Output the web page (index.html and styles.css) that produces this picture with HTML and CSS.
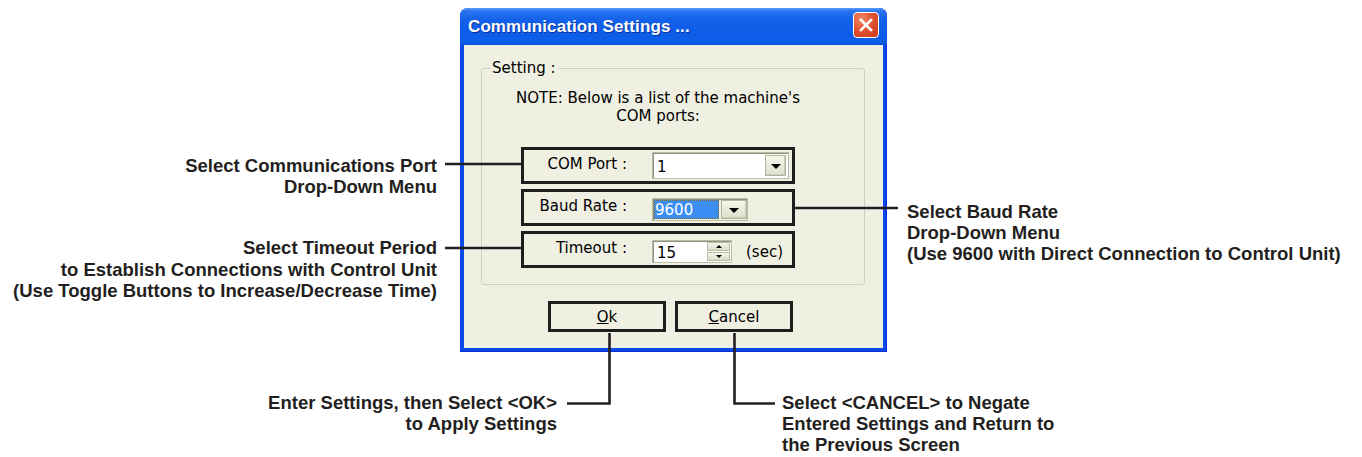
FILE: index.html
```html
<!DOCTYPE html>
<html>
<head>
<meta charset="utf-8">
<link rel="stylesheet" href="styles.css">
</head>
<body>
<div class="canvas">
  <div class="dialog">
    <div class="titlebar">
      <span class="title">Communication Settings ...</span>
      <span class="close"><svg width="24" height="24" viewBox="0 0 24 24"><path d="M7 7 L17 17 M17 7 L7 17" stroke="#fff" stroke-width="2.6" stroke-linecap="square"/></svg></span>
    </div>
    <div class="client">
      <fieldset class="group">
        <legend>Setting :</legend>
        <p class="note">NOTE: Below is a list of the machine's<br>COM ports:</p>
        <div class="rows">
          <div class="row">
            <span class="lbl">COM Port :</span>
            <div class="combo combo-com">
              <span class="val">1</span>
              <span class="dd"><i class="arrow"></i></span>
            </div>
          </div>
          <div class="row">
            <span class="lbl">Baud Rate :</span>
            <div class="combo combo-baud">
              <span class="sel">9600</span>
              <span class="dd dd-wide"><i class="arrow"></i></span>
            </div>
          </div>
          <div class="row">
            <span class="lbl">Timeout :</span>
            <div class="ctl">
              <div class="spin">
                <span class="val">15</span>
                <span class="spin-btns">
                  <span class="sb"><i class="up"></i></span>
                  <span class="sb"><i class="down"></i></span>
                </span>
              </div>
              <span class="unit">(sec)</span>
            </div>
          </div>
        </div>
      </fieldset>
      <div class="buttons">
        <button class="btn"><u>O</u>k</button>
        <button class="btn"><u>C</u>ancel</button>
      </div>
    </div>
  </div>

  <svg class="leaders" width="1362" height="457" viewBox="0 0 1362 457">
    <path d="M445 164 H521" />
    <path d="M445 248 H521" />
    <path d="M795 208 H898" />
    <path d="M609.5 333 V403.5 H567" />
    <path d="M734.5 333 V403.5 H775" />
  </svg>

  <div class="callout c-com">Select Communications Port<br>Drop-Down Menu</div>
  <div class="callout c-timeout">Select Timeout Period<br>to Establish Connections with Control Unit<br>(Use Toggle Buttons to Increase/Decrease Time)</div>
  <div class="callout c-baud">Select Baud Rate<br>Drop-Down Menu<br>(Use 9600 with Direct Connection to Control Unit)</div>
  <div class="callout c-ok">Enter Settings, then Select &lt;OK&gt;<br>to Apply Settings</div>
  <div class="callout c-cancel">Select &lt;CANCEL&gt; to Negate<br>Entered Settings and Return to<br>the Previous Screen</div>
</div>
</body>
</html>
```

FILE: styles.css
```css
* { box-sizing: border-box; }
html, body { margin: 0; background: #fff; }

.canvas {
  position: relative;
  width: 1362px;
  height: 457px;
  overflow: hidden;
  padding: 8px 0 0 460px;
}

/* ---------- dialog window ---------- */
.dialog {
  width: 427px;
  height: 344px;
  display: flex;
  flex-direction: column;
  padding: 0 4px 4px;
  border-radius: 8px 8px 0 0;
  background: #0b4ae8;
  box-shadow: inset -1px 0 0 #0a2fd8, inset 0 -1px 0 #0a2fd8;
}

.titlebar {
  height: 37px;
  margin: 0 -4px;
  padding: 0 8px;
  display: flex;
  align-items: center;
  justify-content: space-between;
  border-radius: 8px 8px 0 0;
  background: linear-gradient(to bottom, #5a9dfb 0%, #2b74f0 8%, #1462ea 30%, #0c5ce8 70%, #0f5fe9 92%, #0b4fe0 100%);
}

.title {
  font: bold 17px/20px "Liberation Sans", Arial, sans-serif;
  color: #fff;
  text-shadow: 1px 1px 0 #0b2f9c;
  letter-spacing: 0.1px;
}

.close {
  width: 26px;
  height: 26px;
  margin-top: -3px;
  display: flex;
  align-items: center;
  justify-content: center;
  border: 1px solid #fff;
  border-radius: 4px;
  background: radial-gradient(circle at 30% 25%, #f08a6a 0%, #e2532f 45%, #c63a1c 100%);
}

.client {
  flex: 1;
  background: #efefe2;
  padding: 14px 0 0 17px;
  font: 15px/18px "DejaVu Sans", Verdana, sans-serif;
  color: #000;
}

/* ---------- group box ---------- */
.group {
  width: 384px;
  margin: 0;
  padding: 0 30px 16px 0;
  border: 1px solid #d0d0bf;
  border-radius: 3px;
  min-inline-size: auto;
}

.group legend {
  margin-left: 8px;
  padding: 0 2px;
  font: 15px/18px "DejaVu Sans", Verdana, sans-serif;
}

.note {
  margin: 12px 0 22px;
  text-align: center;
  white-space: nowrap;
}

.rows {
  display: flex;
  flex-direction: column;
  align-items: center;
  gap: 5px;
}

.row {
  width: 274px;
  height: 37px;
  border: 3px solid #1e1e1e;
  display: grid;
  grid-template-columns: 103px auto;
  column-gap: 25px;
  align-items: center;
  justify-content: start;
}

.lbl {
  text-align: right;
  white-space: nowrap;
  margin-top: -3px;
}

/* ---------- combo boxes ---------- */
.combo {
  display: flex;
  align-items: stretch;
  background: #fff;
  border: 1px solid #b9bca6;
  box-shadow: inset 1px 1px 0 #8e907e;
  padding: 2px;
}

.combo-com { width: 137px; height: 27px; }
.combo-baud { width: 96px; height: 23px; margin-top: 4px; background: #efefe2; padding: 1px 0 1px 1px; }

.val {
  flex: 1;
  padding: 3px 0 0 2px;
  line-height: 18px;
}

.sel {
  width: 66px;
  background: #3d8ef4;
  color: #fff;
  outline: 1px dotted #8a6a20;
  outline-offset: -1px;
  padding-left: 1px;
  line-height: 20px;
}

.dd {
  width: 21px;
  display: flex;
  align-items: center;
  justify-content: center;
  background: linear-gradient(to bottom, #f6f6ec, #dedfcb);
  border: 1px solid #b3b79f;
  box-shadow: inset -1px -1px 0 #c9ccb6;
}

.dd-wide { width: 27px; margin-left: 2px; }

.arrow {
  width: 0;
  height: 0;
  border-left: 5px solid transparent;
  border-right: 5px solid transparent;
  border-top: 5px solid #000;
  margin-top: 1px;
}

/* ---------- spin box ---------- */
.ctl {
  display: flex;
  align-items: center;
  margin-top: 4px;
}

.spin {
  width: 80px;
  height: 23px;
  display: flex;
  background: #fff;
  border: 1px solid #b9bca6;
  box-shadow: inset 1px 1px 0 #8e907e;
  padding: 1px 1px 1px 2px;
}

.spin .val { padding-top: 2px; }

.spin-btns {
  width: 23px;
  display: flex;
  flex-direction: column;
  gap: 1px;
}

.sb {
  flex: 1;
  display: flex;
  align-items: center;
  justify-content: center;
  background: linear-gradient(to bottom, #f4f4ea, #dcdcc8);
  border: 1px solid #b8bca4;
}

.up, .down {
  width: 0;
  height: 0;
  border-left: 3px solid transparent;
  border-right: 3px solid transparent;
}
.up { border-bottom: 3px solid #000; }
.down { border-top: 3px solid #000; }

.unit { margin-left: 14px; }

/* ---------- buttons ---------- */
.buttons {
  width: 384px;
  margin-top: 16px;
  padding-right: 5px;
  display: flex;
  justify-content: center;
  gap: 9px;
}

.btn {
  width: 118px;
  height: 31px;
  padding: 0;
  border: 3px solid #1e1e1e;
  background: transparent;
  font: 15px/18px "DejaVu Sans", Verdana, sans-serif;
  color: #000;
}

/* ---------- annotations ---------- */
.leaders {
  position: absolute;
  left: 0;
  top: 0;
  fill: none;
  stroke: #231f20;
  stroke-width: 2.6;
}

.callout {
  position: absolute;
  font: bold 18.5px/21px "Liberation Sans", Arial, sans-serif;
  color: #231f20;
  white-space: nowrap;
}

.c-com { right: 925px; top: 155px; text-align: right; }
.c-timeout { right: 925px; top: 237px; text-align: right; line-height: 21.5px; }
.c-baud { left: 907px; top: 201px; }
.c-ok { right: 805px; top: 392px; text-align: right; }
.c-cancel { left: 782px; top: 392px; }
```
